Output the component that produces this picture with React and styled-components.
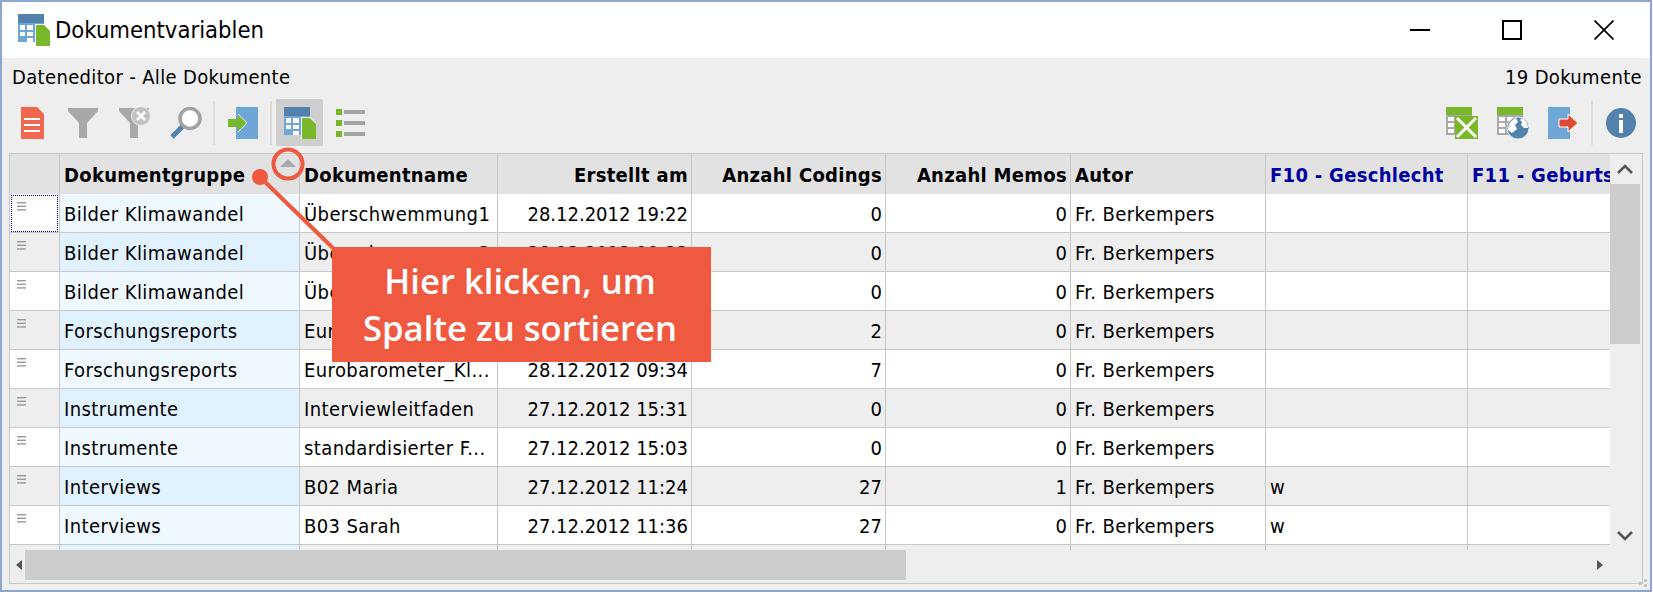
import React from "react"
import styled, { createGlobalStyle } from "styled-components"

const Global = createGlobalStyle`
  html, body {
    margin: 0;
    background: #fff;
    overflow: hidden;
  }
  * { box-sizing: border-box; }
`

const uiFont = `"DejaVu Sans Condensed", "DejaVu Sans", sans-serif`

const Window = styled.div`
  position: relative;
  width: 1652px;
  height: 592px;
  border: 2px solid #8ea6cd;
  background: #eee;
  display: flex;
  flex-direction: column;
  font-family: ${uiFont};
  color: #000;
`

const TitleBar = styled.div`
  height: 56px;
  background: #fff;
  display: flex;
  align-items: center;
  padding-left: 16px;
`

const WindowTitle = styled.div`
  margin-left: 5px;
  font-size: 23.6px;
  flex: 1;
`

const WinButton = styled.div`
  width: 92px;
  height: 56px;
  display: flex;
  align-items: center;
  justify-content: center;
`

const InfoRow = styled.div`
  height: 41px;
  padding: 0 8px 3px 10px;
  display: flex;
  align-items: center;
  justify-content: space-between;
  font-size: 20px;
  letter-spacing: 0.35px;
`

const Toolbar = styled.div`
  display: flex;
  align-items: center;
  gap: 4px;
  padding: 0 6px 7px 7px;
`

const ToolButton = styled.div`
  width: 47px;
  height: 47px;
  display: flex;
  align-items: center;
  justify-content: center;
  background: ${(p) => (p.$active ? "#cfcfcf" : "transparent")};
`

const ToolSep = styled.div`
  width: 2px;
  height: 44px;
  background: #dcdcdc;
`

const Spacer = styled.div`
  flex: 1;
`

const Frame = styled.div`
  margin: 0 7px 6px;
  height: 431px;
  border: 1px solid #c8c8c8;
  display: grid;
  grid-template-columns: 1fr 32px;
  grid-template-rows: 396px 33px;
`

const Cells = styled.div`
  overflow: hidden;
`

const Row = styled.div`
  display: grid;
  grid-template-columns: 50px 240px 198px 194px 194px 185px 195px 202px 220px;
  height: ${(p) => (p.$head ? "40px" : "39px")};
  width: 1678px;
`

const Cell = styled.div`
  position: relative;
  border-right: 1px solid #c8c8c8;
  border-bottom: ${(p) => (p.$head ? "none" : "1px solid #c8c8c8")};
  background: ${(p) => p.$bg};
  padding: 2px 3px 0 4px;
  display: flex;
  align-items: center;
  justify-content: ${(p) => (p.$right ? "flex-end" : "flex-start")};
  font-size: 20px;
  letter-spacing: ${(p) => (p.$head ? "0.3px" : p.$right ? "0" : "0.4px")};
  font-weight: ${(p) => (p.$head ? 700 : 400)};
  color: ${(p) => (p.$blue ? "#0000a0" : "#000")};
  white-space: nowrap;
  overflow: hidden;
`

const SortMark = styled.div`
  position: absolute;
  right: 3px;
  top: 5px;
  width: 0;
  height: 0;
  border-left: 8px solid transparent;
  border-right: 8px solid transparent;
  border-bottom: 8px solid #a8a8a8;
`

const RowHeadCell = styled.div`
  position: relative;
  border-right: 1px solid #c8c8c8;
  border-bottom: 1px solid #c8c8c8;
  background: ${(p) => p.$bg};
  padding: 8px 0 0 7px;
  line-height: 0;
`

const FocusBox = styled.div`
  position: absolute;
  left: 1px;
  top: 1px;
  width: 47px;
  height: 37px;
  border: 1px dotted #0000d0;
`

const VScroll = styled.div`
  grid-row: 1 / 3;
  grid-column: 2;
  position: relative;
  display: flex;
  flex-direction: column;
  align-items: stretch;
`

const VArrow = styled.div`
  height: 30px;
  display: flex;
  align-items: center;
  justify-content: center;
  padding-right: 2px;
`

const VThumb = styled.div`
  width: 30px;
  height: 160px;
  background: #cdcdcd;
`

const VFill = styled.div`
  flex: 1;
`

const VArrowBottom = styled(VArrow)`
  margin-bottom: 33px;
`

const HScroll = styled.div`
  display: flex;
  align-items: flex-start;
  height: 33px;
`

const HArrow = styled.div`
  width: 15px;
  height: 30px;
  display: flex;
  align-items: center;
  justify-content: center;
  margin-left: ${(p) => p.$ml || 0}px;
  padding-left: 3px;
`

const HThumb = styled.div`
  width: 881px;
  height: 30px;
  background: #cdcdcd;
`

const Grip = styled.svg`
  position: absolute;
  right: 2px;
  bottom: 2px;
`

const Callout = styled.div`
  position: absolute;
  left: 330px;
  top: 245px;
  width: 379px;
  height: 115px;
  background: #ef5940;
  color: #fff;
  font-family: "Open Sans", "Noto Sans", sans-serif;
  font-size: 34.7px;
  font-weight: 600;
  line-height: 47px;
  text-align: center;
  padding: 10px 3px 0 0;
`

const Pointer = styled.svg`
  position: absolute;
  left: 0;
  top: 0;
  pointer-events: none;
`

const TableIcon = ({ size = 32 }) => (
  <svg width={size} height={size} viewBox="0 0 32 32">
    <rect x="0" y="0" width="26" height="28" fill="#6ea6d5" />
    <rect x="0" y="0" width="26" height="9" fill="#5282ac" />
    <g fill="#fff">
      <rect x="2" y="11" width="5" height="5" />
      <rect x="9" y="11" width="6" height="5" />
      <rect x="17" y="11" width="6" height="5" />
      <rect x="2" y="18" width="5" height="4" />
      <rect x="9" y="18" width="6" height="4" />
      <rect x="17" y="18" width="6" height="4" />
      <rect x="9" y="24" width="6" height="4" />
    </g>
    <path d="M17 10h9l6 6v16H17z" fill="#fff" />
    <path d="M18 11h8l6 6v15H18z" fill="#78b82a" />
  </svg>
)

const DocIcon = () => (
  <svg width="24" height="32" viewBox="0 0 24 32">
    <path d="M0 0h16l7 7v25H0z" fill="#f1664f" />
    <g fill="#fff">
      <rect x="3" y="11" width="16" height="2" />
      <rect x="3" y="17" width="16" height="2" />
      <rect x="3" y="23" width="16" height="2" />
    </g>
  </svg>
)

const FunnelIcon = ({ clear }) => (
  <svg width="32" height="32" viewBox="0 0 32 32">
    <path d="M0 1h30v3L19 16v15h-8V16L0 4z" fill="#a8a8a8" />
    {clear && (
      <>
        <circle cx="22" cy="9" r="9.5" fill="#c2c2c2" stroke="#eee" strokeWidth="1" />
        <path d="M18 5l8 8M26 5l-8 8" stroke="#fff" strokeWidth="2.6" />
      </>
    )}
  </svg>
)

const SearchIcon = () => (
  <svg width="32" height="32" viewBox="0 0 32 32">
    <path d="M2 30L13 19" stroke="#5282ac" strokeWidth="5" />
    <circle cx="20" cy="11.5" r="10" fill="#fff" stroke="#a3a3a3" strokeWidth="3.6" />
  </svg>
)

const ImportIcon = () => (
  <svg width="32" height="32" viewBox="0 0 32 32">
    <rect x="9" y="0" width="22" height="32" fill="#6ea6d5" />
    <path d="M1 12h10V7l9 9-9 9v-5H1z" fill="#78b82a" />
    <path d="M11 7l9 9-9 9" fill="none" stroke="#fff" strokeWidth="1" />
  </svg>
)

const ListIcon = () => (
  <svg width="30" height="28" viewBox="0 0 30 28">
    <g fill="#78b82a">
      <rect x="0" y="0" width="6" height="6" />
      <rect x="0" y="11" width="6" height="6" />
      <rect x="0" y="22" width="6" height="6" />
    </g>
    <g fill="#a3a3a3">
      <rect x="8" y="1" width="21" height="4" />
      <rect x="8" y="12" width="21" height="4" />
      <rect x="8" y="23" width="21" height="4" />
    </g>
  </svg>
)

const GreenTable = () => (
  <>
    <rect x="0" y="0" width="26" height="28" fill="#a8a8a8" />
    <rect x="0" y="0" width="26" height="8" fill="#78b82a" />
    <g fill="#fff">
      <rect x="2" y="10" width="6" height="4" />
      <rect x="10" y="10" width="6" height="4" />
      <rect x="18" y="10" width="6" height="4" />
      <rect x="2" y="16" width="6" height="4" />
      <rect x="10" y="16" width="6" height="4" />
      <rect x="2" y="22" width="6" height="4" />
      <rect x="10" y="22" width="6" height="4" />
    </g>
  </>
)

const ExcelIcon = () => (
  <svg width="32" height="32" viewBox="0 0 32 32">
    <GreenTable />
    <rect x="9" y="9" width="23" height="23" fill="#78b82a" />
    <path d="M11 11l19 19M30 11L11 30" stroke="#fff" strokeWidth="3" />
  </svg>
)

const GlobeIcon = () => (
  <svg width="32" height="32" viewBox="0 0 32 32">
    <GreenTable />
    <circle cx="21" cy="21" r="11" fill="#5282ac" stroke="#dfe8f0" strokeWidth="1" />
    <path d="M11 23c0-6 3-10 8-12l2 4-3 3 2 4-5 4zM25 11c3 2 6 5 6 10l-4 0-3-3 1-3-2-2z" fill="#fff" />
  </svg>
)

const ExportIcon = () => (
  <svg width="32" height="32" viewBox="0 0 32 32">
    <rect x="0" y="0" width="22" height="32" fill="#6ea6d5" />
    <path d="M11 12h9V7l10 9-10 9v-5h-9z" fill="#e04a32" stroke="#fff" strokeWidth="1" />
  </svg>
)

const InfoIcon = () => (
  <svg width="30" height="30" viewBox="0 0 30 30">
    <circle cx="15" cy="15" r="15" fill="#5282ac" />
    <rect x="13" y="12" width="4" height="13" fill="#fff" />
    <rect x="13" y="6" width="4" height="4" fill="#fff" />
  </svg>
)

const RowHandle = () => (
  <svg width="10" height="9" viewBox="0 0 10 9">
    <g fill="#999">
      <rect x="0" y="0" width="9" height="1.4" />
      <rect x="0" y="3.6" width="9" height="1.4" />
      <rect x="0" y="7.2" width="9" height="1.4" />
    </g>
  </svg>
)

const Chevron = ({ down }) => (
  <svg width="18" height="11" viewBox="0 0 18 11">
    <path d={down ? "M2 2l7 7 7-7" : "M2 9l7-7 7 7"} fill="none" stroke="#555" strokeWidth="2.6" />
  </svg>
)

const SideArrow = ({ right }) => (
  <svg width="6" height="10" viewBox="0 0 6 10">
    <path d={right ? "M0 0l6 5-6 5z" : "M6 0L0 5l6 5z"} fill="#555" />
  </svg>
)

const columns = [
  { title: "Dokumentgruppe" },
  { title: "Dokumentname" },
  { title: "Erstellt am", right: true },
  { title: "Anzahl Codings", right: true },
  { title: "Anzahl Memos", right: true },
  { title: "Autor" },
  { title: "F10 - Geschlecht", blue: true },
  { title: "F11 - Geburtsdatum", blue: true },
]

const author = "Fr. Berkempers"

const rows = [
  ["Bilder Klimawandel", "Überschwemmung1", "28.12.2012 19:22", "0", "0", author, ""],
  ["Bilder Klimawandel", "Überschwemmung2", "28.12.2012 19:22", "0", "0", author, ""],
  ["Bilder Klimawandel", "Überschwemmung3", "28.12.2012 19:22", "0", "0", author, ""],
  ["Forschungsreports", "Eurobarometer_Kl...", "28.12.2012 09:34", "2", "0", author, ""],
  ["Forschungsreports", "Eurobarometer_Kl...", "28.12.2012 09:34", "7", "0", author, ""],
  ["Instrumente", "Interviewleitfaden", "27.12.2012 15:31", "0", "0", author, ""],
  ["Instrumente", "standardisierter F...", "27.12.2012 15:03", "0", "0", author, ""],
  ["Interviews", "B02 Maria", "27.12.2012 11:24", "27", "1", author, "w"],
  ["Interviews", "B03 Sarah", "27.12.2012 11:36", "27", "0", author, "w"],
  ["", "", "", "", "", "", ""],
]

const App = () => {
  return (
    <>
      <Global />
      <Window>
        <TitleBar>
          <TableIcon />
          <WindowTitle>Dokumentvariablen</WindowTitle>
          <WinButton>
            <svg width="20" height="20" viewBox="0 0 20 20">
              <path d="M0 10h20" stroke="#000" strokeWidth="2" />
            </svg>
          </WinButton>
          <WinButton>
            <svg width="20" height="20" viewBox="0 0 20 20">
              <rect x="1" y="1" width="18" height="18" fill="none" stroke="#000" strokeWidth="2" />
            </svg>
          </WinButton>
          <WinButton>
            <svg width="20" height="20" viewBox="0 0 20 20">
              <path d="M0.5 0.5l19 19M19.5 0.5l-19 19" stroke="#000" strokeWidth="1.7" />
            </svg>
          </WinButton>
        </TitleBar>

        <InfoRow>
          <span>Dateneditor - Alle Dokumente</span>
          <span>19 Dokumente</span>
        </InfoRow>

        <Toolbar>
          <ToolButton><DocIcon /></ToolButton>
          <ToolButton><FunnelIcon /></ToolButton>
          <ToolButton><FunnelIcon clear /></ToolButton>
          <ToolButton><SearchIcon /></ToolButton>
          <ToolSep />
          <ToolButton><ImportIcon /></ToolButton>
          <ToolSep />
          <ToolButton $active><TableIcon /></ToolButton>
          <ToolButton><ListIcon /></ToolButton>
          <Spacer />
          <ToolButton><ExcelIcon /></ToolButton>
          <ToolButton><GlobeIcon /></ToolButton>
          <ToolButton><ExportIcon /></ToolButton>
          <ToolSep />
          <ToolButton><InfoIcon /></ToolButton>
        </Toolbar>

        <Frame>
          <Cells>
            <Row $head>
              <Cell $head $bg="#e2e2e2" />
              {columns.map((col, i) => (
                <Cell key={col.title} $head $bg="#e2e2e2" $right={col.right} $blue={col.blue}>
                  {col.title}
                  {i === 0 && <SortMark />}
                </Cell>
              ))}
            </Row>
            {rows.map((row, r) => {
              const even = r % 2 === 1
              const bg = even ? "#eeeeee" : "#ffffff"
              return (
                <Row key={r}>
                  <RowHeadCell $bg={bg}>
                    <RowHandle />
                    {r === 0 && <FocusBox />}
                  </RowHeadCell>
                  {row.map((text, c) => (
                    <Cell
                      key={c}
                      $bg={c === 0 ? (even ? "#e0f1ff" : "#f0f8ff") : bg}
                      $right={columns[c].right}
                    >
                      {text}
                    </Cell>
                  ))}
                  <Cell $bg={bg} />
                </Row>
              )
            })}
          </Cells>

          <VScroll>
            <VArrow><Chevron /></VArrow>
            <VThumb />
            <VFill />
            <VArrowBottom><Chevron down /></VArrowBottom>
          </VScroll>

          <HScroll>
            <HArrow><SideArrow /></HArrow>
            <HThumb />
            <HArrow $ml={685}><SideArrow right /></HArrow>
          </HScroll>
        </Frame>

        <Grip width="9" height="9" viewBox="0 0 9 9">
          <g fill="#c4c4c4">
            <rect x="5" y="0" width="3" height="3" />
            <rect x="0" y="3" width="3" height="3" />
            <rect x="5" y="5" width="3" height="3" />
          </g>
        </Grip>

        <Pointer width="400" height="260" viewBox="0 0 400 260">
          <circle cx="286" cy="162" r="14.5" fill="none" stroke="#ef5940" strokeWidth="4" />
          <circle cx="258" cy="175" r="8" fill="#ef5940" />
          <path d="M258 175L335 250" stroke="#ef5940" strokeWidth="4" />
        </Pointer>

        <Callout>
          Hier klicken, um
          <br />
          Spalte zu sortieren
        </Callout>
      </Window>
    </>
  )
}

export default App
